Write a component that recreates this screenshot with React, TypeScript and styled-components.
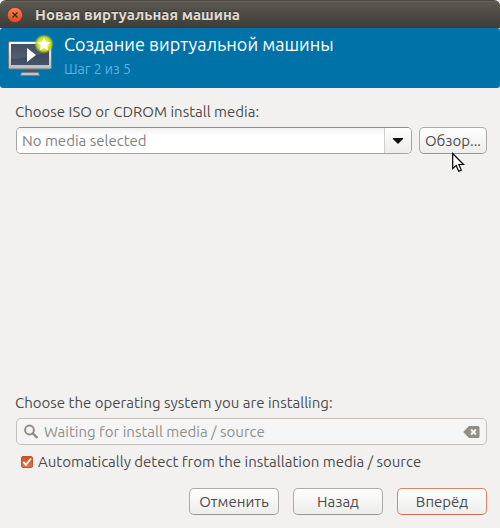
import React, { useState } from "react";
import styled, { createGlobalStyle } from "styled-components";

const GlobalStyle = createGlobalStyle`
  *, *::before, *::after { box-sizing: border-box; }
  body {
    margin: 0;
    background: #f2f1f0;
    font-family: Ubuntu, "Noto Sans", sans-serif;
    font-size: 15px;
    line-height: 20px;
    color: #4c4c4c;
  }
  button, input { font: inherit; color: inherit; }
`;

const Window = styled.div`
  display: flex;
  flex-direction: column;
  min-height: 100vh;
  background: #f2f1f0;
`;

const TitleBar = styled.header`
  display: flex;
  align-items: center;
  gap: 12px;
  height: 28px;
  padding: 0 7px;
  border-radius: 6px 6px 0 0;
  border-top: 1px solid #4a4943;
  background: linear-gradient(#5b5a50, #3d3c38);
  box-shadow: inset 0 1px 0 #66645a;
`;

const CloseButton = styled.button`
  display: flex;
  width: 16px;
  height: 16px;
  padding: 0;
  border: 0;
  background: none;
`;

const WindowTitle = styled.span`
  font-weight: 700;
  color: #dfdbd2;
  text-shadow: 0 -1px 0 #33322e;
`;

const Banner = styled.section`
  display: flex;
  gap: 8px;
  height: 60px;
  padding: 5px 8px;
  border-radius: 3px;
  background: #0072a8;
`;

const BannerText = styled.div`
  display: flex;
  flex-direction: column;
`;

const Heading = styled.h1`
  margin: 0;
  font-size: 18px;
  line-height: 22px;
  font-weight: 400;
  color: #fff;
`;

const Step = styled.p`
  margin: 2px 0 0;
  font-size: 14px;
  color: #5bb2e4;
  line-height: 24px;
`;

const Form = styled.form`
  display: flex;
  flex: 1;
  flex-direction: column;
  padding: 13px 13px 13px 16px;
`;

const Label = styled.label`
  align-self: flex-start;
  height: 26px;
  margin-left: -1px;
  line-height: 22px;
`;

const MediaRow = styled.div`
  display: flex;
  gap: 7px;
  margin-bottom: auto;
`;

const Combo = styled.div`
  display: flex;
  flex: 1;
  height: 27px;
  border: 1px solid #a5a4a2;
  border-top-color: #8e8e8e;
  border-radius: 5px;
  background: #fff;
  overflow: hidden;
`;

const ComboInput = styled.input`
  flex: 1;
  min-width: 0;
  padding: 0 5px;
  border: 0;
  outline: 0;
  background: linear-gradient(#f2f2f2, #fff 8px);
  &::placeholder { color: #808080; opacity: 1; }
`;

const ComboArrow = styled.button`
  display: flex;
  align-items: center;
  justify-content: center;
  width: 27px;
  padding: 0;
  border: 0;
  border-left: 1px solid #d0cfcd;
  background: linear-gradient(#fefefe, #ededec);
`;

const Button = styled.button<{ $primary?: boolean; $compact?: boolean }>`
  width: ${(p) => (p.$compact ? 68 : 90)}px;
  height: 27px;
  padding: 0;
  border: 1px solid ${(p) => (p.$primary ? "#dc8465" : "#acaba9")};
  border-bottom-color: ${(p) => (p.$primary ? "#d66d48" : "#979694")};
  border-radius: 5px;
  background: linear-gradient(#fff, #ededec);
  line-height: 24px;
  white-space: nowrap;
`;

const BrowseCell = styled.div`
  position: relative;
  display: flex;
`;

const Pointer = styled.svg`
  position: absolute;
  top: 25px;
  left: 33px;
  pointer-events: none;
`;

const Search = styled.div`
  display: flex;
  align-items: center;
  gap: 4px;
  height: 27px;
  padding: 0 6px;
  border: 1px solid #c2c1c0;
  border-radius: 5px;
  background: #f5f5f5;
`;

const SearchInput = styled.input`
  flex: 1;
  min-width: 0;
  padding: 0 1px;
  border: 0;
  background: none;
  &::placeholder { color: #8f8f8f; opacity: 1; }
`;

const ClearButton = styled.button`
  display: flex;
  padding: 0;
  border: 0;
  background: none;
`;

const CheckLabel = styled.label`
  display: flex;
  align-items: center;
  align-self: flex-start;
  gap: 5px;
  height: 22px;
  margin: 6px 0 0 5px;
`;

const CheckBox = styled.span`
  display: grid;
  width: 12px;
  height: 12px;
  & > * { grid-area: 1 / 1; }
`;

const CheckInput = styled.input`
  appearance: none;
  width: 12px;
  height: 12px;
  margin: 0;
  border: 1px solid #a5a4a2;
  border-radius: 2px;
  background: #fff;
  &:checked {
    border-color: #bc5630;
    background: linear-gradient(#c95426, #e2754d);
  }
  &:not(:checked) + svg { visibility: hidden; }
`;

const Actions = styled.div`
  display: flex;
  justify-content: flex-end;
  gap: 14px;
  margin-top: 15px;
`;

const CloseIcon = () => (
  <svg width="16" height="16" viewBox="0 0 16 16" aria-hidden="true">
    <defs>
      <linearGradient id="close" x2="0" y2="1">
        <stop offset="0" stopColor="#f58458" />
        <stop offset="1" stopColor="#dc4a1d" />
      </linearGradient>
    </defs>
    <circle cx="8" cy="8" r="7.6" fill="url(#close)" stroke="#5a3a2c" strokeWidth=".6" />
    <path d="M5.5 5.5 10.5 10.5M10.5 5.5 5.5 10.5" stroke="#4a2015" strokeWidth="1.2" />
  </svg>
);

const MachineIcon = () => (
  <svg width="48" height="48" viewBox="0 0 48 48" aria-hidden="true">
    <defs>
      <linearGradient id="frame" x2="0" y2="1">
        <stop offset="0" stopColor="#fafafa" />
        <stop offset="1" stopColor="#bcbcbc" />
      </linearGradient>
      <linearGradient id="screen" x2="0" y2="1">
        <stop offset="0" stopColor="#333e50" />
        <stop offset="1" stopColor="#46546a" />
      </linearGradient>
      <radialGradient id="glow">
        <stop offset="0.45" stopColor="#e6f020" />
        <stop offset="0.7" stopColor="#c2d81e" />
        <stop offset="1" stopColor="#80ad38" stopOpacity="0" />
      </radialGradient>
    </defs>
    <path d="M17 36h11v4H17z" fill="#555" />
    <path d="M13.5 39.5h17l1 3h-19z" fill="#c4c4c4" stroke="#7b7b7b" strokeWidth=".8" />
    <rect x=".5" y="8.5" width="43" height="27.5" rx="1.5" fill="url(#frame)" stroke="#777" />
    <rect x="3" y="11" width="38" height="21" fill="url(#screen)" />
    <path d="M3 11h38v6Q29 24 3 26z" fill="#fff" opacity=".09" />
    <path d="M19 15v14l9-7z" fill="#fff" />
    <circle cx="36" cy="11" r="10" fill="url(#glow)" />
    <path d="m36 4.500 2 4.200 4.800.6-3.500 3.300.9 4.800-4.200-2.300-4.200 2.300.9-4.800-3.500-3.300 4.800-.6z" fill="#fff" />
  </svg>
);

const SearchIcon = () => (
  <svg width="16" height="16" viewBox="0 0 16 16" aria-hidden="true" fill="none" stroke="#918c86">
    <circle cx="6.5" cy="6" r="4.4" strokeWidth="2" />
    <path d="m9.5 9.2 5 4.8" strokeWidth="2.4" />
  </svg>
);

const ClearIcon = () => (
  <svg width="17" height="12" viewBox="0 0 17 12" aria-hidden="true">
    <path d="M6 0h9q1.5 0 1.5 1.5v9q0 1.5-1.5 1.5H6L.3 6z" fill="#918c86" />
    <path d="m8 3.500 5 5m0-5-5 5" stroke="#f5f5f5" strokeWidth="2" />
  </svg>
);

export default function App() {
  const [auto, setAuto] = useState(true);
  return (
    <>
      <GlobalStyle />
      <Window>
        <TitleBar>
          <CloseButton type="button" aria-label="Закрыть">
            <CloseIcon />
          </CloseButton>
          <WindowTitle>Новая виртуальная машина</WindowTitle>
        </TitleBar>
        <Banner>
          <MachineIcon />
          <BannerText>
            <Heading>Создание виртуальной машины</Heading>
            <Step>Шаг 2 из 5</Step>
          </BannerText>
        </Banner>
        <Form onSubmit={(e) => e.preventDefault()}>
          <Label htmlFor="media">Choose ISO or CDROM install media:</Label>
          <MediaRow>
            <Combo>
              <ComboInput id="media" placeholder="No media selected" />
              <ComboArrow type="button" aria-label="Install media list">
                <svg width="10" height="6" viewBox="0 0 10 6" aria-hidden="true">
                  <path d="M0 0h10v1L5 6 0 1z" fill="#111" />
                </svg>
              </ComboArrow>
            </Combo>
            <BrowseCell>
              <Button type="button" $compact>Обзор...</Button>
              <Pointer width="13" height="21" viewBox="0 0 13 21" aria-hidden="true">
                <path
                  d="M.7 1.5v15.2l3.5-3.3 2.5 5.8 2.6-1.1-2.5-5.6h4.7z"
                  fill="#fff"
                  stroke="#000"
                  strokeWidth="1.2"
                />
              </Pointer>
            </BrowseCell>
          </MediaRow>
          <Label htmlFor="os">Choose the operating system you are installing:</Label>
          <Search>
            <SearchIcon />
            <SearchInput id="os" placeholder="Waiting for install media / source" disabled />
            <ClearButton type="button" aria-label="Clear">
              <ClearIcon />
            </ClearButton>
          </Search>
          <CheckLabel>
            <CheckBox>
              <CheckInput type="checkbox" checked={auto} onChange={(e) => setAuto(e.target.checked)} />
              <svg width="12" height="12" viewBox="0 0 12 12" aria-hidden="true" pointerEvents="none">
                <path d="m2.3 5.8 2.7 3L10 2.5" fill="none" stroke="#fff" strokeWidth="1.8" />
              </svg>
            </CheckBox>
            Automatically detect from the installation media / source
          </CheckLabel>
          <Actions>
            <Button type="button">Отменить</Button>
            <Button type="button">Назад</Button>
            <Button type="submit" $primary>Вперёд</Button>
          </Actions>
        </Form>
      </Window>
    </>
  );
}
